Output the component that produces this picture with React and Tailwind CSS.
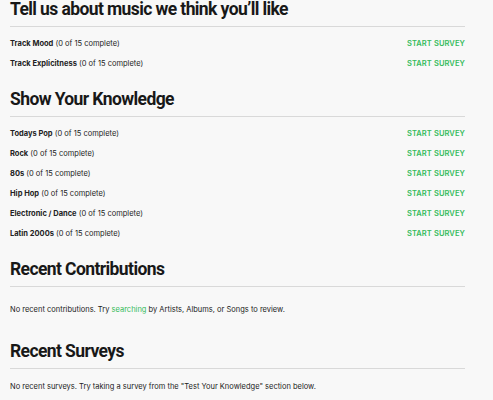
const taste = ['Track Mood', 'Track Explicitness']
const knowledge = ['Todays Pop', 'Rock', '80s', 'Hip Hop', 'Electronic / Dance', 'Latin 2000s']

function Heading({ children, className = '' }) {
  return (
    <div className={`border-b border-[#d9d9d9] pb-[8px] ${className}`}>
      <h2 className="font-['Roboto',sans-serif] text-[17.5px] leading-[18px] font-bold tracking-[-0.6px] text-[#181818]">{children}</h2>
    </div>
  )
}

function SurveyRow({ name }) {
  return (
    <div className="flex h-[20px] items-center justify-between text-[7.5px]">
      <span className="text-[#222]">
        <span className="font-bold">{name}</span> (0 of 15 complete)
      </span>
      <a className="font-semibold uppercase tracking-[0.1px] text-[#34bb5a]">Start Survey</a>
    </div>
  )
}

export default function App() {
  return (
    <div className="min-h-[400px] w-full bg-[#f8f8f8] font-['Inter',sans-serif]">
      <div className="w-[455px] pl-[10px] box-content">
        <section>
          <Heading>Tell us about music we think you’ll like</Heading>
          <div className="pt-[7px]">
            {taste.map((n) => (
              <SurveyRow key={n} name={n} />
            ))}
          </div>
        </section>

        <section className="mt-[16px]">
          <Heading>Show Your Knowledge</Heading>
          <div className="pt-[7px]">
            {knowledge.map((n) => (
              <SurveyRow key={n} name={n} />
            ))}
          </div>
        </section>

        <section className="mt-[16px]">
          <Heading>Recent Contributions</Heading>
          <p className="pt-[13px] text-[7.5px] leading-[20px] text-[#222]">
            No recent contributions. Try <a className="text-[#34bb5a]">searching</a> by Artists, Albums, or Songs to review.
          </p>
        </section>

        <section className="mt-[22px]">
          <Heading>Recent Surveys</Heading>
          <p className="pt-[8px] text-[7.5px] leading-[20px] text-[#222]">
            No recent surveys. Try taking a survey from the "Test Your Knowledge" section below.
          </p>
        </section>
      </div>
    </div>
  )
}
